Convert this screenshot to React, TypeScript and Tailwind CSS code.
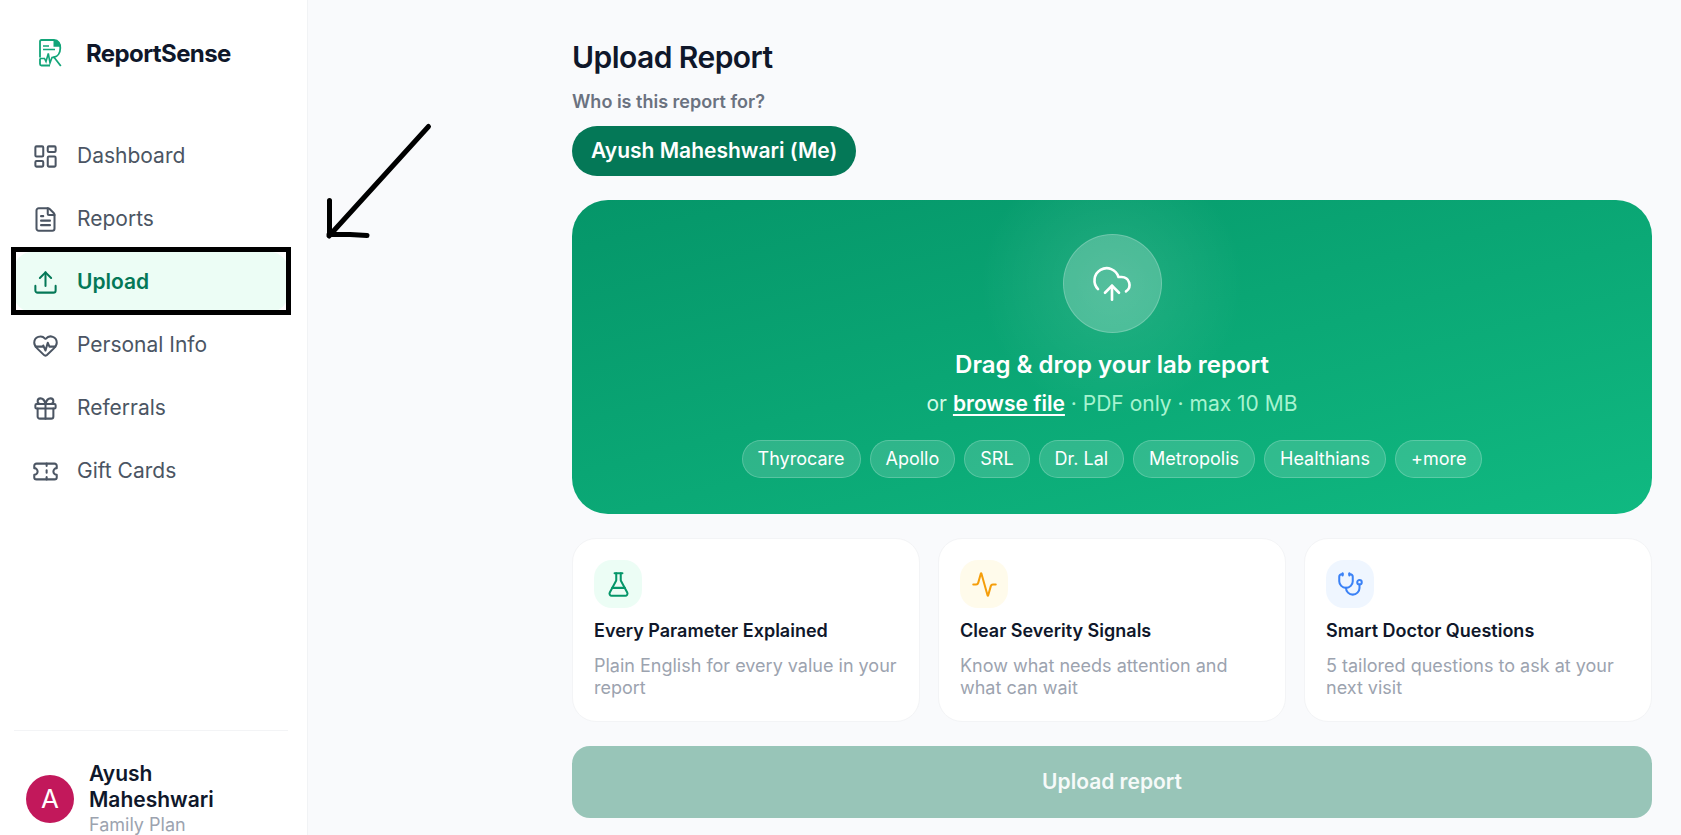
import {
  Activity,
  CloudUpload,
  FileText,
  FlaskConical,
  Gift,
  HeartPulse,
  LayoutDashboard,
  Stethoscope,
  Ticket,
  Upload,
  type LucideIcon,
} from "lucide-react";
import { useState } from "react";

type NavItem = { label: string; icon: LucideIcon };

const NAV_ITEMS: NavItem[] = [
  { label: "Dashboard", icon: LayoutDashboard },
  { label: "Reports", icon: FileText },
  { label: "Upload", icon: Upload },
  { label: "Personal Info", icon: HeartPulse },
  { label: "Referrals", icon: Gift },
  { label: "Gift Cards", icon: Ticket },
];

const LABS = ["Thyrocare", "Apollo", "SRL", "Dr. Lal", "Metropolis", "Healthians", "+more"];

const FEATURES = [
  {
    title: "Every Parameter Explained",
    text: "Plain English for every value in your report",
    icon: FlaskConical,
    tone: "bg-[#ecfdf5] text-[#059669]",
  },
  {
    title: "Clear Severity Signals",
    text: "Know what needs attention and what can wait",
    icon: Activity,
    tone: "bg-[#fffbeb] text-[#f59e0b]",
  },
  {
    title: "Smart Doctor Questions",
    text: "5 tailored questions to ask at your next visit",
    icon: Stethoscope,
    tone: "bg-[#eff6ff] text-[#3b82f6]",
  },
];

function Logo() {
  return (
    <svg width="24" height="30" viewBox="0 0 24 30" fill="none" stroke="#12a579" strokeWidth="1.8">
      <path d="M2 19.500V3.500Q2 2 3.500 2H16C20.500 2 22.300 6 22.300 10C22.300 15 19.500 18.500 16 19.200L22.800 28" />
      <path d="M2 20.500V26Q2 27.500 3.500 27.500H12" />
      <path d="M2 20.500H6.500L8 23.500L10.300 15.500L12 25L14 19.500H17" strokeWidth="1.600" />
      <path d="M5 8H11M5 11.500H17" strokeWidth="1.400" />
      <path d="M15.500 2C20 2 22.800 5 22.800 8.800H15.500Z" fill="#12a579" stroke="none" />
    </svg>
  );
}

function Sidebar() {
  const [active, setActive] = useState("Upload");

  return (
    <aside className="flex w-[308px] shrink-0 flex-col border-r border-[#f1f3f5] bg-white">
      <div className="flex h-[106px] items-center gap-6 pl-[38px]">
        <Logo />
        <span className="pt-0.5 text-[24px] font-bold tracking-[-0.6px] text-[#0f172a]">ReportSense</span>
      </div>

      <nav className="mt-5 flex flex-col gap-[3px] pl-3.5 pr-[19px]">
        {NAV_ITEMS.map(({ label, icon: Icon }) => {
          const isActive = label === active;
          return (
            <button
              key={label}
              type="button"
              onClick={() => setActive(label)}
              className={`relative flex h-[60px] items-center gap-[18px] rounded-[18px] px-[18px] text-[21px] ${
                isActive ? "bg-[#ecfdf5] font-semibold text-[#047857]" : "text-[#4b5563]"
              }`}
            >
              <Icon size={27} strokeWidth={1.8} />
              {label}
              {isActive ? (
                <span className="pointer-events-none absolute -inset-x-[3px] -top-[5px] -bottom-[3px] border-5 border-black" />
              ) : null}
            </button>
          );
        })}
      </nav>

      <div className="mt-auto ml-3.5 mr-[19px] flex h-[105px] items-center gap-[15px] border-t border-[#f3f4f6] pl-3 pt-[31px]">
        <div className="flex size-12 shrink-0 items-center justify-center rounded-full bg-[#c2185b] text-[26px] text-white">
          A
        </div>
        <div>
          <p className="text-[21px] leading-[26px] font-semibold text-[#0f172a]">
            Ayush
            <br />
            Maheshwari
          </p>
          <p className="text-[18px] leading-[24px] text-[#9ca3af]">Family Plan</p>
        </div>
      </div>
    </aside>
  );
}

function DropZone() {
  return (
    <section className="relative mt-6 flex h-[314px] flex-col items-center overflow-hidden rounded-[36px] bg-[linear-gradient(165deg,#059669,#10b981)] pt-[34px] text-white">
      <div className="absolute top-[-66px] left-1/2 size-[300px] -translate-x-1/2 bg-[radial-gradient(circle,rgba(255,255,255,0.11)_0%,rgba(255,255,255,0)_62%)]" />
      <div className="relative flex size-[99px] shrink-0 items-center justify-center rounded-full border border-white/20 bg-white/22">
        <CloudUpload size={42} strokeWidth={1.5} />
      </div>
      <h2 className="relative mt-3.5 text-[24px] leading-9 font-semibold">
        Drag &amp; drop your lab report
      </h2>
      <p className="relative mt-1.5 text-[21px] leading-[30px] text-[#a7f3d0]">
        <span className="text-[#d1fae5]">or </span>
        <span className="font-semibold text-white underline decoration-2 underline-offset-3">browse file</span>
        {" · PDF only · max 10 MB"}
      </p>
      <div className="relative mt-[21px] flex gap-[9px]">
        {LABS.map((lab) => (
          <span
            key={lab}
            className="flex h-[38px] items-center rounded-full border border-white/20 bg-white/15 px-[15px] pb-px text-[18px]"
          >
            {lab}
          </span>
        ))}
      </div>
    </section>
  );
}

function FeatureCards() {
  return (
    <section className="mt-6 grid grid-cols-3 gap-[18px]">
      {FEATURES.map(({ title, text, icon: Icon, tone }) => (
        <article key={title} className="h-[184px] rounded-[24px] border border-[#f3f4f6] bg-white p-[21px]">
          <div className={`flex size-12 items-center justify-center rounded-[18px] ${tone}`}>
            <Icon size={27} strokeWidth={1.8} />
          </div>
          <h3 className="mt-[11px] text-[18px] leading-6 font-semibold text-[#0f172a]">{title}</h3>
          <p className="mt-3 text-[18px] leading-[22px] text-[#9ca3af]">{text}</p>
        </article>
      ))}
    </section>
  );
}

function PointerArrow() {
  return (
    <svg
      className="pointer-events-none absolute left-[320px] top-[116px]"
      width="120"
      height="130"
      viewBox="320 116 120 130"
      fill="none"
      stroke="black"
      strokeWidth="5"
      strokeLinecap="round"
      strokeLinejoin="round"
    >
      <path d="M428.500 126.500L379 181L329 236M329.500 200.500V235M329 234.500H350L367 235.500" />
    </svg>
  );
}

export default function App() {
  return (
    <div className="relative flex h-[835px] overflow-hidden bg-[#f9fafc] font-['Inter',sans-serif]">
      <Sidebar />
      <main className="ml-[264px] w-[1080px] pt-[37px]">
        <h1 className="text-[30px] leading-10 font-semibold tracking-[-0.55px] text-[#0f172a]">Upload Report</h1>
        <p className="mt-3 text-[18px] leading-[26px] font-semibold text-[#6b7280]">Who is this report for?</p>
        <button
          type="button"
          className="mt-[11px] flex h-[50px] items-center rounded-full bg-[#047857] px-[19px] text-[21px] font-semibold text-white"
        >
          Ayush Maheshwari (Me)
        </button>
        <DropZone />
        <FeatureCards />
        <button
          type="button"
          disabled
          className="mt-6 h-[72px] w-full rounded-[18px] bg-[#98c5b8] text-[21px] font-semibold text-[#f6faf9]"
        >
          Upload report
        </button>
      </main>
      <PointerArrow />
    </div>
  );
}
